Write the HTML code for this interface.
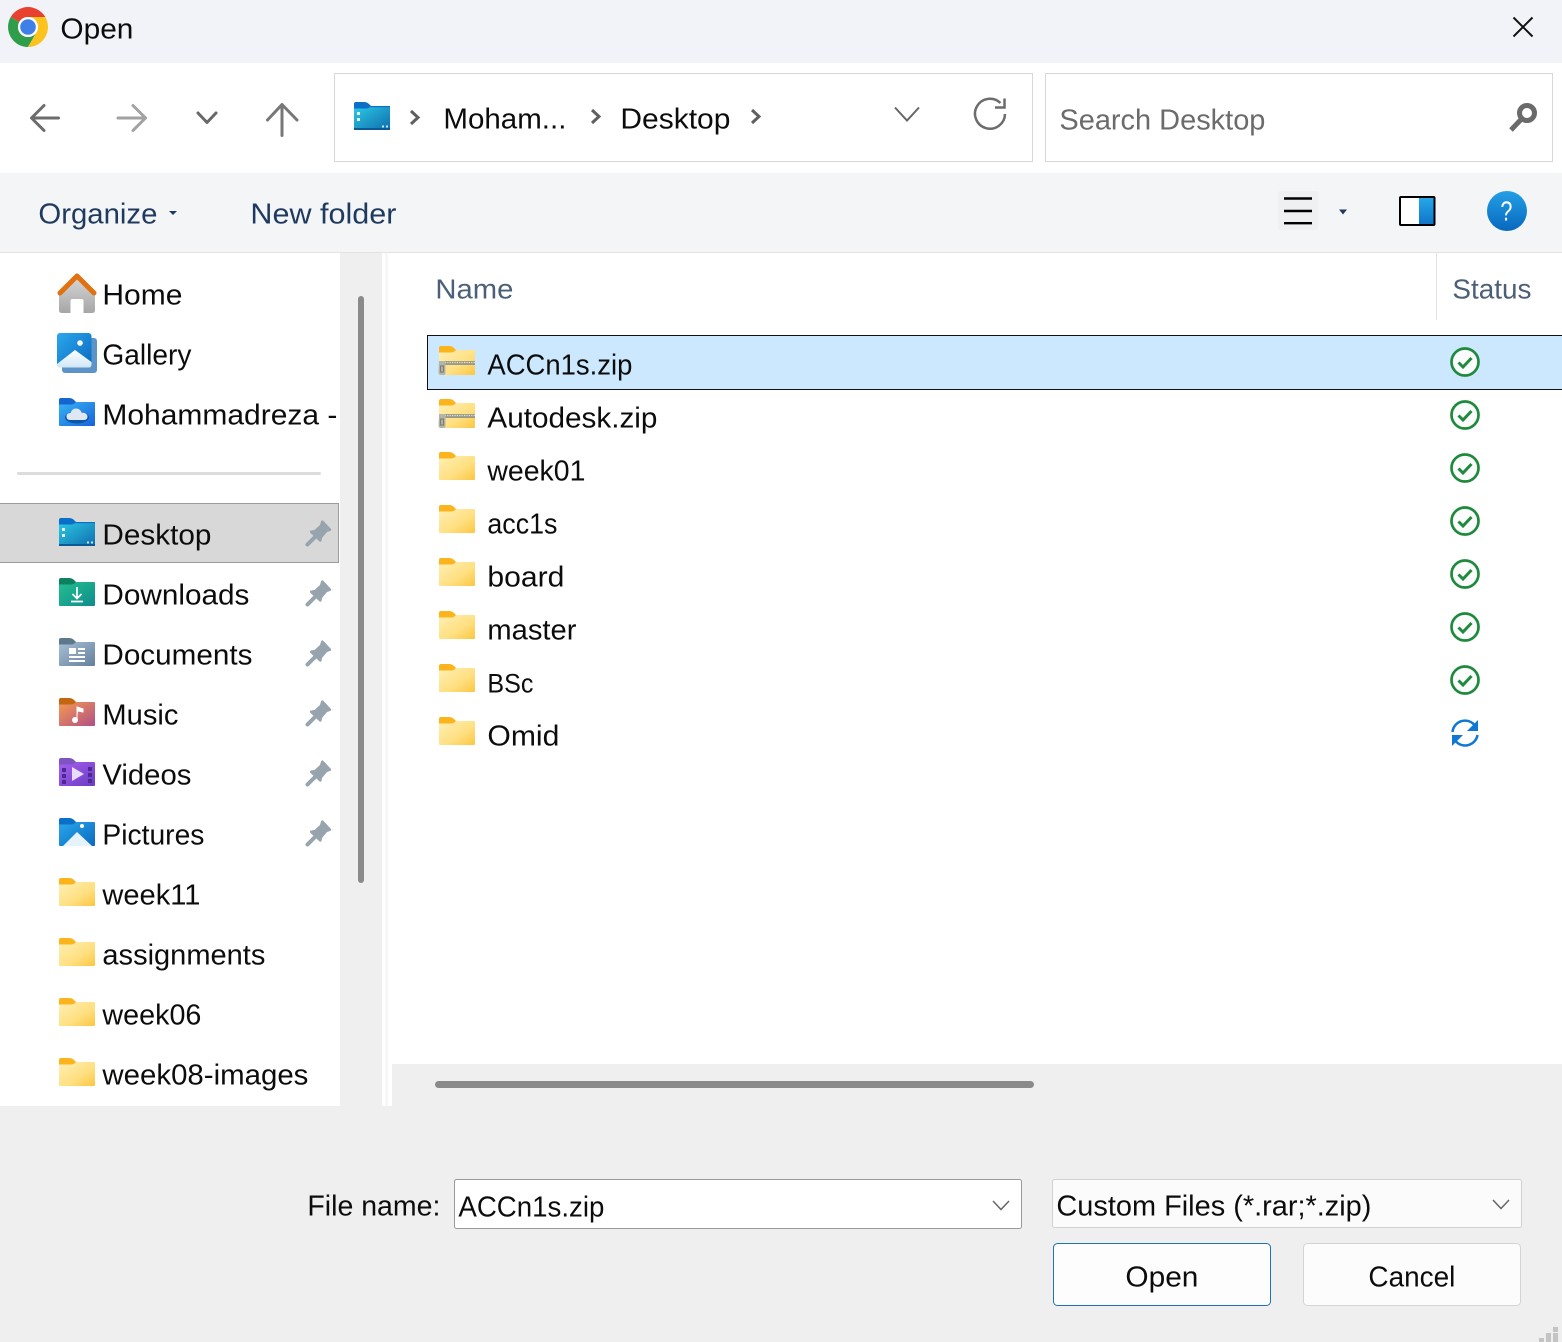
<!DOCTYPE html>
<html><head><meta charset="utf-8"><title>Open</title>
<style>
html,body{margin:0;padding:0;width:1562px;height:1342px;overflow:hidden;background:#efefef}
svg{display:block}
text{font-family:"Liberation Sans",sans-serif;font-size:29px;fill:#0c0c0c;transform:translate(-0.6px,-0.5px)}
.t{fill:#1f3a5f}
.h{fill:#4c5f78;font-size:28px}
</style></head><body>
<svg xmlns="http://www.w3.org/2000/svg" width="1562" height="1342" viewBox="0 0 1562 1342">
<defs>
<linearGradient id="fy" x1="0" y1="0" x2="1" y2="1"><stop offset="0" stop-color="#fff0b5"/><stop offset=".6" stop-color="#ffdf80"/><stop offset="1" stop-color="#fcc640"/></linearGradient>
<linearGradient id="fd" x1="0" y1="0" x2="1" y2="1"><stop offset="0" stop-color="#2ccbe4"/><stop offset="1" stop-color="#0f6cae"/></linearGradient>
<linearGradient id="fg" x1="0" y1="0" x2="1" y2="1"><stop offset="0" stop-color="#24c08e"/><stop offset="1" stop-color="#0e8b8e"/></linearGradient>
<linearGradient id="fdoc" x1="0" y1="0" x2="1" y2="1"><stop offset="0" stop-color="#a9bfd6"/><stop offset="1" stop-color="#64809c"/></linearGradient>
<linearGradient id="fm" x1="0" y1="0" x2="1" y2="1"><stop offset="0" stop-color="#f59a50"/><stop offset="1" stop-color="#b04f86"/></linearGradient>
<linearGradient id="fv" x1="0" y1="0" x2="1" y2="1"><stop offset="0" stop-color="#a760ee"/><stop offset="1" stop-color="#6a3bc4"/></linearGradient>
<linearGradient id="fp" x1="0" y1="0" x2="1" y2="1"><stop offset="0" stop-color="#2aa8ec"/><stop offset="1" stop-color="#0a68c0"/></linearGradient>
<linearGradient id="fo" x1="0" y1="0" x2="1" y2="1"><stop offset="0" stop-color="#38b4f2"/><stop offset="1" stop-color="#1662dc"/></linearGradient>
<linearGradient id="hb" x1="0" y1="0" x2="0" y2="1"><stop offset="0" stop-color="#d8d8d8"/><stop offset="1" stop-color="#a6a6a6"/></linearGradient>
<linearGradient id="hp" x1="0" y1="0" x2="0" y2="1"><stop offset="0" stop-color="#23a0e6"/><stop offset="1" stop-color="#0868be"/></linearGradient>
<linearGradient id="pv" x1="0" y1="0" x2="0" y2="1"><stop offset="0" stop-color="#27a8ea"/><stop offset="1" stop-color="#0f74c8"/></linearGradient>
<linearGradient id="gm" x1="0" y1="0" x2="0" y2="1"><stop offset="0" stop-color="#ffffff"/><stop offset="1" stop-color="#cfe6f8"/></linearGradient>

<symbol id="tab" viewBox="0 0 18 8" width="18" height="8" overflow="visible">
 <path d="M0 2Q0 0 2 0H10Q13 0 15 2L17 4Q15 6.500 12 6.500H0Z" fill="currentColor"/>
</symbol>
<symbol id="folder" viewBox="0 0 36 28" width="36" height="28" overflow="visible">
 <path d="M0 4H35Q36 4 36 5V27Q36 28 35 28H1Q0 28 0 27Z" fill="url(#fy)"/>
 <path d="M0 2Q0 0 2 0H10Q13 0 15 2L17 4Q15 6.500 12 6.500H0Z" fill="#fbb41c"/>
</symbol>
<symbol id="zip" viewBox="0 0 38 30" width="38" height="30" overflow="visible">
 <path d="M1 4H36Q37 4 37 5V28Q37 29 36 29H2Q1 29 1 28Z" fill="url(#fy)"/>
 <path d="M1 2Q1 0 3 0H11Q14 0 16 2L18 4Q16 6.500 13 6.500H1Z" fill="#fbb41c"/>
 <rect x="1" y="15" width="36" height="4" fill="#9a9a88"/>
 <path d="M2 16.500H37" stroke="#e8e8d8" stroke-width="1.200" stroke-dasharray="1.200 1.200"/>
 <path d="M1 15H7.500V27Q7.500 29 5.500 29H3Q1 29 0.500 27Z" fill="#b4b4a8"/>
 <rect x="2.500" y="20" width="3" height="6" fill="none" stroke="#7c7c72" stroke-width="1.100"/>
</symbol>
<symbol id="pin" viewBox="0 0 26 26" width="26" height="26" overflow="visible">
 <path d="M17 0.500L25 9Q25.500 10.500 24 11L21 12L16 18L15.500 21Q14.500 22.500 13 21L4.500 13Q3 11 5 10.500L8.500 10L14 5L15 1.500Q15.500 0 17 0.500Z" fill="#97a3ad"/>
 <path d="M1.500 24.500L9 17" stroke="#97a3ad" stroke-width="4" stroke-linecap="round"/>
</symbol>
<symbol id="ok" viewBox="0 0 30 30" width="30" height="30">
 <circle cx="15" cy="15" r="13.500" fill="#fafdfb" stroke="#1f8a3d" stroke-width="2.700"/>
 <path d="M8.500 15.500L13 20L21.500 11" fill="none" stroke="#1f8a3d" stroke-width="3"/>
</symbol>
<symbol id="desk" viewBox="0 0 36 28" width="36" height="28" overflow="visible">
 <path d="M0 4H35Q36 4 36 5V27Q36 28 35 28H1Q0 28 0 27Z" fill="url(#fd)"/>
 <path d="M0 2Q0 0 2 0H10Q13 0 15 2L17 4Q15 6.500 12 6.500H0Z" fill="#0a6fc8"/>
 <rect x="14" y="4" width="22" height="1.200" fill="#0a6fc8"/>
 <rect x="0" y="26" width="36" height="2" fill="#0b5a96"/>
 <rect x="3" y="10" width="3" height="3" fill="#e6fbff"/><rect x="3" y="16" width="3" height="3" fill="#e6fbff"/>
 <rect x="28" y="23.500" width="2" height="2" fill="#bfe8f6"/><rect x="32" y="23.500" width="2" height="2" fill="#bfe8f6"/>
</symbol>
</defs>

<!-- backgrounds -->
<rect width="1562" height="1342" fill="#efefef"/>
<rect width="1562" height="63" fill="#f1f3f8"/>
<rect y="63" width="1562" height="110" fill="#fff"/>
<rect y="173" width="1562" height="79" fill="#f4f5f7"/>
<rect y="252" width="1562" height="1" fill="#e3e3e3"/>
<rect y="253" width="340" height="853" fill="#fff"/>
<rect x="340" y="253" width="42" height="853" fill="#efefef"/>
<rect x="382" y="253" width="3" height="853" fill="#fff"/>
<rect x="385" y="253" width="3" height="853" fill="#f7f7f7"/>
<rect x="388" y="253" width="1174" height="811" fill="#fff"/>
<rect x="388" y="1064" width="4" height="42" fill="#fff"/>
<rect x="392" y="1064" width="1170" height="42" fill="#efefef"/>
<rect x="358" y="296" width="6" height="587" rx="3" fill="#8a8a8a"/>
<rect x="435" y="1081" width="599" height="7" rx="3.500" fill="#8a8a8a"/>

<!-- title bar -->
<g>
 <circle cx="28" cy="27" r="20" fill="#fff"/>
 <path d="M45.300 17A20 20 0 0 0 10.700 17L19.300 22A10 10 0 0 1 28 17Z" fill="#e8412f"/>
 <path d="M10.700 17A20 20 0 0 0 28 47L36.700 32A10 10 0 0 1 19.300 22Z" fill="#2f9e4b"/>
 <path d="M45.300 17A20 20 0 0 1 28 47L36.700 32A10 10 0 0 0 28 17Z" fill="#fcc31e"/>
 <circle cx="28" cy="27" r="10" fill="#fff"/>
 <circle cx="28" cy="27" r="7.800" fill="#3f7fe8"/>
</g>
<text x="61" y="39" textLength="73" lengthAdjust="spacingAndGlyphs">Open</text>
<path d="M1513.500 17.500L1532.500 36.500M1532.500 17.500L1513.500 36.500" stroke="#111" stroke-width="2" fill="none"/>

<!-- nav -->
<g fill="none" stroke-linecap="round" stroke-linejoin="round">
 <path d="M58.500 118H32M44 105.500L31.500 118L44 130.500" stroke="#6c6c6c" stroke-width="3"/>
 <path d="M118 118H145.500M133 105.500L145.500 118L133 130.500" stroke="#a2a2a2" stroke-width="3"/>
 <path d="M198 113L207 122.500L216 113" stroke="#686868" stroke-width="3"/>
 <path d="M282 135.500V105M267.500 120L282 104.500L297 120" stroke="#777" stroke-width="3"/>
</g>
<rect x="334.500" y="73.500" width="698" height="88" fill="#fff" stroke="#d8d8d8"/>
<rect x="1045.500" y="73.500" width="507" height="88" fill="#fff" stroke="#d8d8d8"/>
<use href="#desk" x="354" y="102"/>
<g fill="none" stroke="#5f5f5f" stroke-width="3">
 <path d="M411 111L418 117.500L411 124"/>
 <path d="M592 110L599 116.500L592 123"/>
 <path d="M752 110L759 116.500L752 123"/>
</g>
<text x="444" y="129" textLength="123" lengthAdjust="spacingAndGlyphs">Moham...</text>
<text x="621" y="129" textLength="110" lengthAdjust="spacingAndGlyphs">Desktop</text>
<path d="M895 107.500L907 120.500L919 107.500" fill="none" stroke="#666" stroke-width="2"/>
<path d="M1000.500 103A15 15 0 1 0 1005 114" fill="none" stroke="#6c6c6c" stroke-width="2.500"/>
<path d="M1004.500 98.500V107.500H995" fill="none" stroke="#6c6c6c" stroke-width="2.500"/>
<text x="1060" y="130" textLength="206" lengthAdjust="spacingAndGlyphs" style="fill:#6b6b6b">Search Desktop</text>
<circle cx="1527" cy="113" r="7.500" fill="none" stroke="#6a6a6a" stroke-width="5"/>
<path d="M1521 119.500L1511 130" stroke="#6a6a6a" stroke-width="5"/>

<!-- toolbar -->
<text class="t" x="39" y="224" textLength="119" lengthAdjust="spacingAndGlyphs">Organize</text>
<path d="M169 211h8l-4 4z" fill="#1f3a5f"/>
<text class="t" x="251" y="224" textLength="146" lengthAdjust="spacingAndGlyphs">New folder</text>
<rect x="1278" y="191" width="40" height="39" rx="2" fill="#eff0f1"/>
<path d="M1284 198.500H1312M1284 211H1312M1284 223.200H1312" stroke="#000" stroke-width="2.400" fill="none"/>
<path d="M1339 209.500h8l-4 5z" fill="#1f3a5f"/>
<rect x="1400" y="197" width="34.500" height="28" rx="1" fill="#fff"/>
<rect x="1419" y="197" width="15.500" height="28" fill="url(#pv)"/>
<rect x="1400" y="197" width="34.500" height="28" rx="1" fill="none" stroke="#000" stroke-width="2"/>
<circle cx="1507" cy="211" r="20" fill="url(#hp)"/>
<text x="1501" y="221" textLength="12" lengthAdjust="spacingAndGlyphs" style="fill:#fff;font-size:28px">?</text>

<!-- headers -->
<text class="h" x="436" y="299" textLength="78" lengthAdjust="spacingAndGlyphs">Name</text>
<rect x="1436" y="253" width="1" height="67" fill="#e2e2e2"/>
<text class="h" x="1453" y="299" textLength="79" lengthAdjust="spacingAndGlyphs">Status</text>

<!-- sidebar -->
<g>
 <path d="M62 313Q59 313 59 310V293L77 276L95 293V310Q95 313 92 313H83.500V301Q83.500 299 81.500 299H72.500Q70.500 299 70.500 301V313Z" fill="url(#hb)"/>
 <path d="M60 293L77 276L94 293" fill="none" stroke="#e2710f" stroke-width="5" stroke-linecap="round" stroke-linejoin="round"/>
 <rect x="62" y="338" width="35" height="35" rx="3" fill="#5e93c8"/>
 <rect x="57" y="333" width="34.500" height="34.500" rx="3" fill="url(#fp)"/>
 <path d="M57 364L75 350L91.500 362V364.500Q91.500 367.500 88.500 367.500H60Q57 367.500 57 364.500Z" fill="url(#gm)"/>
 <circle cx="80" cy="343" r="2.800" fill="#fff"/>
 <rect x="59" y="402" width="36" height="24" rx="1" fill="url(#fo)"/>
 <path d="M59 400Q59 398 61 398H69Q72 398 74 400L76 402Q74 404.500 71 404.500H59Z" fill="#1565d0"/>
 <ellipse cx="77" cy="417.500" rx="12" ry="6" fill="#0c56a8"/>
 <path d="M70 420Q66.500 420 66.500 416.500Q66.500 413 70.500 413Q72 408.500 76 408.500Q80 408.500 81.500 412.500Q87 412.500 87.500 416.500Q87.500 420 84 420Z" fill="#dfe8f2"/>
</g>
<text x="103" y="305" textLength="80" lengthAdjust="spacingAndGlyphs">Home</text>
<text x="103" y="365" textLength="89" lengthAdjust="spacingAndGlyphs">Gallery</text>
<text x="103" y="425" textLength="235" lengthAdjust="spacingAndGlyphs">Mohammadreza -</text>
<rect x="17" y="472" width="304" height="3" rx="1.500" fill="#dcdcdc"/>
<rect x="-1" y="503.500" width="339.500" height="59" fill="#d8d8d8" stroke="#9b9b9b"/>
<use href="#desk" x="59" y="518"/>
<text x="103" y="545" textLength="109" lengthAdjust="spacingAndGlyphs">Desktop</text>
<use href="#pin" x="306" y="520"/>

<!-- downloads -->
<rect x="59" y="582" width="36" height="24" rx="1" fill="url(#fg)"/>
<use href="#tab" x="59" y="578" style="color:#0d7f63"/>
<path d="M77 587V598M72.500 594L77 598.500L81.500 594M71 601.500H83" fill="none" stroke="#fff" stroke-width="1.700"/>
<text x="103" y="605" textLength="147" lengthAdjust="spacingAndGlyphs">Downloads</text>
<use href="#pin" x="306" y="580"/>
<!-- documents -->
<rect x="59" y="642" width="36" height="24" rx="1" fill="url(#fdoc)"/>
<use href="#tab" x="59" y="638" style="color:#5d7a8c"/>
<path d="M69 648h7v6h-7zM78 648h7v2h-7zM78 652h7v2h-7zM69 656h16v2h-16zM69 660h16v2h-16z" fill="#fff"/>
<text x="103" y="665" textLength="150" lengthAdjust="spacingAndGlyphs">Documents</text>
<use href="#pin" x="306" y="640"/>
<!-- music -->
<rect x="59" y="702" width="36" height="24" rx="1" fill="url(#fm)"/>
<use href="#tab" x="59" y="698" style="color:#c2660f"/>
<circle cx="75" cy="720" r="3" fill="#fff"/><path d="M77 720V707L83 709V712L78 711" fill="#fff" stroke="#fff" stroke-width="1"/>
<text x="103" y="725" textLength="76" lengthAdjust="spacingAndGlyphs">Music</text>
<use href="#pin" x="306" y="700"/>
<!-- videos -->
<rect x="59" y="762" width="36" height="24" rx="1" fill="url(#fv)"/>
<use href="#tab" x="59" y="758" style="color:#7e54c4"/>
<path d="M72 767L84 774L72 781Z" fill="#e9dcff"/>
<path d="M62 768h4v4h-4zM62 774h4v4h-4zM62 780h4v4h-4zM88 767h4v4h-4zM88 773h4v4h-4zM88 779h4v4h-4z" fill="#4a2a94"/>
<text x="103" y="785" textLength="89" lengthAdjust="spacingAndGlyphs">Videos</text>
<use href="#pin" x="306" y="760"/>
<!-- pictures -->
<rect x="59" y="822" width="36" height="24" rx="1" fill="url(#fp)"/>
<use href="#tab" x="59" y="818" style="color:#0a6fc8"/>
<path d="M63 846L77 832L92 846Z" fill="#e6f3fc"/><circle cx="82" cy="826" r="2" fill="#fff"/>
<text x="103" y="845" textLength="102" lengthAdjust="spacingAndGlyphs">Pictures</text>
<use href="#pin" x="306" y="820"/>

<use href="#folder" x="59" y="878"/><text x="103" y="905" textLength="98" lengthAdjust="spacingAndGlyphs">week11</text>
<use href="#folder" x="59" y="938"/><text x="103" y="965" textLength="163" lengthAdjust="spacingAndGlyphs">assignments</text>
<use href="#folder" x="59" y="998"/><text x="103" y="1025" textLength="99" lengthAdjust="spacingAndGlyphs">week06</text>
<use href="#folder" x="59" y="1058"/><text x="103" y="1085" textLength="206" lengthAdjust="spacingAndGlyphs">week08-images</text>

<!-- file list -->
<rect x="427.500" y="335.500" width="1140" height="54" fill="#cce8ff" stroke="#111"/>
<use href="#zip" x="438" y="346"/><text x="488" y="375" textLength="145" lengthAdjust="spacingAndGlyphs">ACCn1s.zip</text>
<use href="#zip" x="438" y="399"/><text x="488" y="428" textLength="170" lengthAdjust="spacingAndGlyphs">Autodesk.zip</text>
<use href="#folder" x="439" y="452"/><text x="488" y="481" textLength="98" lengthAdjust="spacingAndGlyphs">week01</text>
<use href="#folder" x="439" y="505"/><text x="488" y="534" textLength="70" lengthAdjust="spacingAndGlyphs">acc1s</text>
<use href="#folder" x="439" y="558"/><text x="488" y="587" textLength="77" lengthAdjust="spacingAndGlyphs">board</text>
<use href="#folder" x="439" y="611"/><text x="488" y="640" textLength="89" lengthAdjust="spacingAndGlyphs">master</text>
<use href="#folder" x="439" y="664"/><text x="488" y="693" textLength="46" lengthAdjust="spacingAndGlyphs" style="font-size:27px">BSc</text>
<use href="#folder" x="439" y="717"/><text x="488" y="746" textLength="72" lengthAdjust="spacingAndGlyphs">Omid</text>

<use href="#ok" x="1450" y="347"/>
<use href="#ok" x="1450" y="400"/>
<use href="#ok" x="1450" y="453"/>
<use href="#ok" x="1450" y="506"/>
<use href="#ok" x="1450" y="559"/>
<use href="#ok" x="1450" y="612"/>
<use href="#ok" x="1450" y="665"/>
<g fill="none" stroke="#0f78d4" stroke-width="2.500">
 <path d="M1452.500 732A12.500 12.500 0 0 1 1474 724.500"/>
 <path d="M1477.500 735A12.500 12.500 0 0 1 1456 741.500"/>
</g>
<path d="M1478 720V731H1467Z" fill="#0f78d4"/>
<path d="M1452 746V735H1463Z" fill="#0f78d4"/>

<!-- bottom -->
<text x="308" y="1216" textLength="133" lengthAdjust="spacingAndGlyphs">File name:</text>
<rect x="454.500" y="1179.500" width="567" height="49" rx="2" fill="#fff" stroke="#9a9a9a"/>
<text x="459" y="1217" textLength="146" lengthAdjust="spacingAndGlyphs">ACCn1s.zip</text>
<path d="M993 1201L1001 1209.500L1009 1201" fill="none" stroke="#666" stroke-width="1.500"/>
<rect x="1052.500" y="1179.500" width="469" height="48" rx="2" fill="#fbfbfb" stroke="#d2d2d2"/>
<text x="1057" y="1216" textLength="315" lengthAdjust="spacingAndGlyphs">Custom Files (*.rar;*.zip)</text>
<path d="M1493 1200L1501 1208.500L1509 1200" fill="none" stroke="#666" stroke-width="1.500"/>
<rect x="1053.500" y="1243.500" width="217" height="62" rx="4" fill="#fdfdfd" stroke="#1f73b0"/>
<text x="1126" y="1287" textLength="73" lengthAdjust="spacingAndGlyphs">Open</text>
<rect x="1303.500" y="1243.500" width="217" height="62" rx="4" fill="#fcfcfc" stroke="#d4d4d4"/>
<text x="1369" y="1287" textLength="87" lengthAdjust="spacingAndGlyphs">Cancel</text>
<path d="M1553 1327h5v5h-5zM1546 1333h5v5h-5zM1553 1333h5v5h-5zM1539 1338h5v4h-5zM1546 1338h5v4h-5zM1553 1338h5v4h-5z" fill="#c4c4c4"/>
</svg>
</body></html>
